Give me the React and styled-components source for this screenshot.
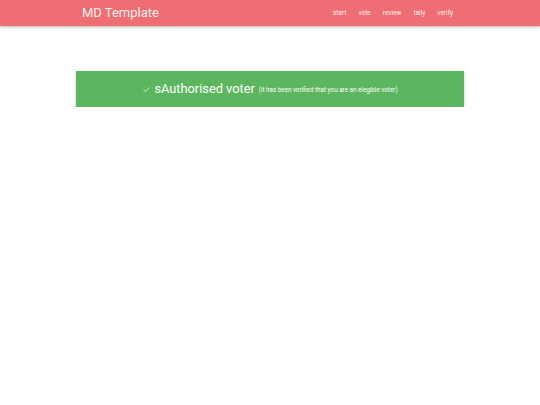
import React from "react";
import styled, { createGlobalStyle } from "styled-components";

const GlobalStyle = createGlobalStyle`
  html, body {
    margin: 0;
    padding: 0;
    background: #fff;
    font-family: Roboto, "Liberation Sans", sans-serif;
  }
`;

const links = ["start", "vote", "review", "tally", "verify"];

const App = () => {
  return (
    <>
      <GlobalStyle />
      <Nav>
        <NavInner>
          <Brand>MD Template</Brand>
          <Links>
            {links.map((link) => (
              <NavLink key={link}>{link}</NavLink>
            ))}
          </Links>
        </NavInner>
      </Nav>
      <Main>
        <Alert>
          <Check viewBox="0 0 24 24">
            <path d="M4 12.5l5 5L20 6.5" />
          </Check>
          <Title>sAuthorised voter</Title>
          <Note>(it has been verified that you are an elegible voter)</Note>
        </Alert>
      </Main>
    </>
  );
};

const Nav = styled.nav`
  height: 26px;
  background-color: #ee6e73;
  box-shadow: 0 1px 3px rgba(0, 0, 0, 0.18), 0 1px 2px rgba(0, 0, 0, 0.12);
`;

const NavInner = styled.div`
  width: 378px;
  height: 100%;
  margin: 0 auto;
  display: flex;
  align-items: center;
  justify-content: space-between;
`;

const Brand = styled.a`
  color: rgba(255, 255, 255, 0.92);
  font-size: 13px;
  padding-left: 1px;
  line-height: 1;
  margin-top: -1px;
`;

const Links = styled.ul`
  display: flex;
  list-style: none;
  margin: 0;
  padding: 0;
`;

const NavLink = styled.li`
  color: rgba(255, 255, 255, 0.92);
  font-size: 6.5px;
  padding: 0 6px;
  line-height: 26px;
`;

const Main = styled.main`
  width: 388px;
  margin: 45px auto 0;
`;

const Alert = styled.div`
  height: 36px;
  background-color: #5cb660;
  box-shadow: 0 1px 3px rgba(0, 0, 0, 0.16), 0 1px 2px rgba(0, 0, 0, 0.1);
  display: flex;
  align-items: center;
  justify-content: center;
  color: #fff;
`;

const Check = styled.svg`
  width: 9px;
  height: 9px;
  margin-right: 3px;
  fill: none;
  stroke: #fff;
  stroke-width: 2;
`;

const Title = styled.span`
  font-size: 12.8px;
  line-height: 1;
`;

const Note = styled.span`
  font-size: 6.3px;
  margin-left: 4px;
  margin-top: 2px;
`;

export default App;
